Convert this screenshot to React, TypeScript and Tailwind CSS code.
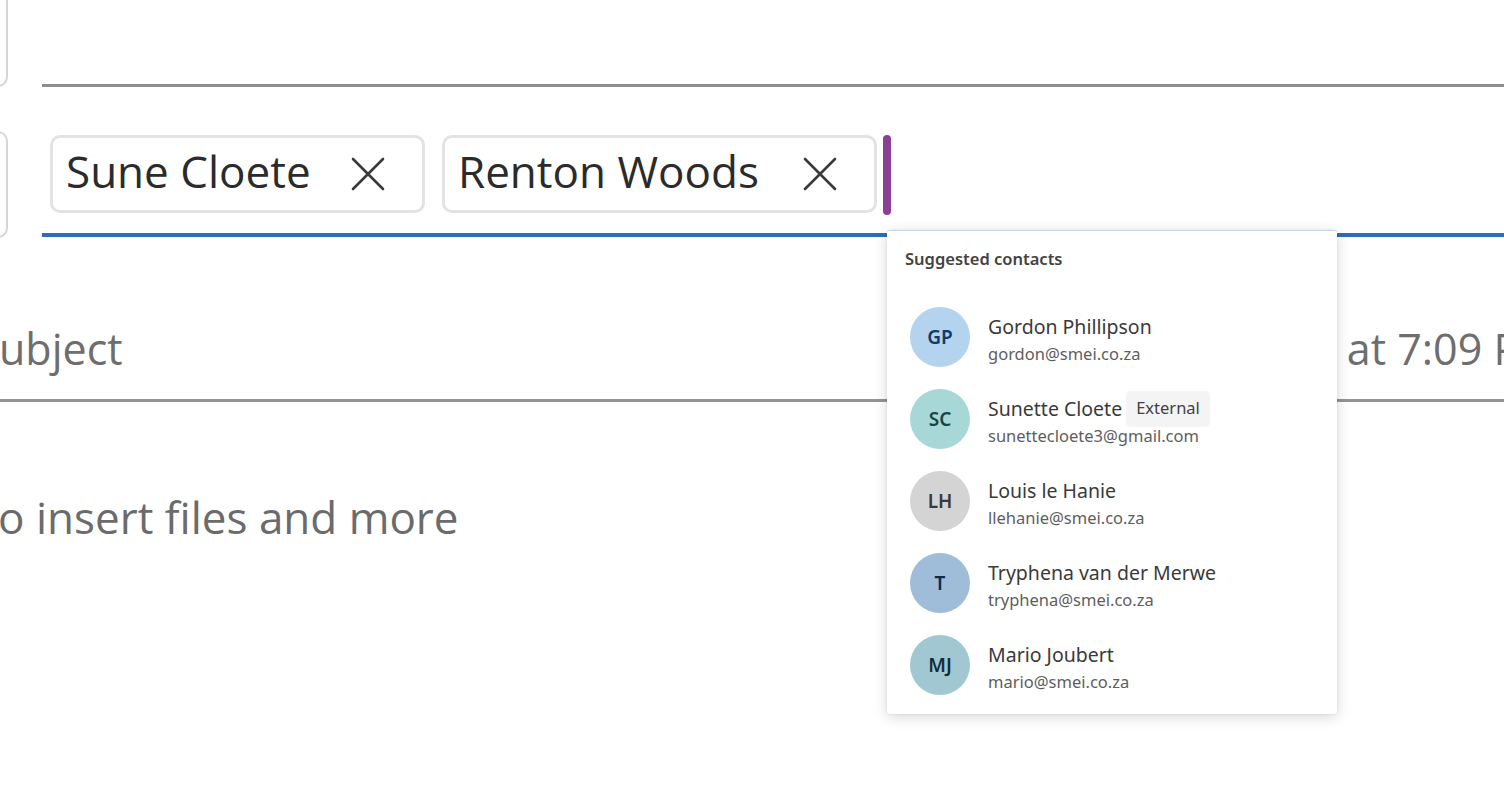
import React from "react";

const contacts = [
  { initials: "GP", name: "Gordon Phillipson", email: "gordon@smei.co.za", bg: "bg-[#b3d3ef]", fg: "text-[#0f3a6b]", external: false },
  { initials: "SC", name: "Sunette Cloete", email: "sunettecloete3@gmail.com", bg: "bg-[#a8d7d7]", fg: "text-[#174745]", external: true },
  { initials: "LH", name: "Louis le Hanie", email: "llehanie@smei.co.za", bg: "bg-[#d5d4d5]", fg: "text-[#3b3b3b]", external: false },
  { initials: "T", name: "Tryphena van der Merwe", email: "tryphena@smei.co.za", bg: "bg-[#9fbcd8]", fg: "text-[#0d2b4b]", external: false },
  { initials: "MJ", name: "Mario Joubert", email: "mario@smei.co.za", bg: "bg-[#a1c8d2]", fg: "text-[#112f38]", external: false },
];

function XIcon() {
  return (
    <svg width="36" height="36" viewBox="0 0 36 36" fill="none">
      <path d="M3 3 L33 33 M33 3 L3 33" stroke="#3a3a3a" strokeWidth="2.6" strokeLinecap="round" />
    </svg>
  );
}

function Chip({ label, width }: { label: string; width: string }) {
  return (
    <div className={`flex items-center justify-between h-[78px] ${width} rounded-[10px] border-[3px] border-[#e3e3e3] pl-[13px] pr-[36px]`}>
      <span className="text-[44px] leading-none text-[#2b2b2b] pb-[6px]">{label}</span>
      <XIcon />
    </div>
  );
}

export default function App() {
  return (
    <div className="relative w-[1504px] h-[810px] overflow-hidden bg-white font-['Open_Sans',sans-serif]">
      {/* Row 1 */}
      <div className="flex items-start h-[87px]">
        <div className="shrink-0 -ml-[100px] -mt-[20px] w-[108px] h-[107px] rounded-[10px] border-[2px] border-[#d6d6d6]" />
        <div className="flex-1 ml-[34px] h-[87px] border-b-[3px] border-[#8e8e8e]" />
      </div>

      {/* Row 2 - recipients */}
      <div className="flex items-start h-[151px]">
        <div className="shrink-0 -ml-[100px] mt-[44px] w-[108px] h-[107px] rounded-[10px] border-[2px] border-[#d6d6d6]" />
        <div className="flex-1 ml-[34px] h-[150px] border-b-[4px] border-[#2f6bbf] flex items-start pt-[48px] pl-[8px] gap-[17px]">
          <Chip label="Sune Cloete" width="w-[375px]" />
          <Chip label="Renton Woods" width="w-[435px]" />
          <div className="-ml-[11px] mt-0 w-[8px] h-[80px] rounded-full bg-[#8b3f97]" />
        </div>
      </div>

      {/* Row 3 - subject */}
      <div className="flex items-start justify-between h-[164px] border-b-[3px] border-[#939393]">
        <span className="text-[43px] leading-[66px] text-[#6e6e6e] -ml-[1px] mt-[78px]">ubject</span>
        <span className="text-[43px] leading-[66px] text-[#6e6e6e] whitespace-nowrap -mr-[54px] mt-[78px]">at 7:09 PM</span>
      </div>

      {/* Body */}
      <div className="pt-[82px]">
        <span className="text-[44px] leading-[66px] text-[#6b6b6b] -ml-[2px] whitespace-nowrap">o insert files and more</span>
      </div>

      {/* Suggestions dropdown */}
      <div className="absolute left-[887px] top-[230px] w-[450px] h-[484px] bg-white rounded-[3px] border-t border-[#c9d7ea] shadow-[0_3px_14px_rgba(0,0,0,0.16),0_0_3px_rgba(0,0,0,0.08)] font-['Noto_Sans',sans-serif]">
        <div className="pl-[18px] pt-[17px] text-[16.5px] font-semibold text-[#424242] leading-[22px]">Suggested contacts</div>
        <div className="mt-[37px] flex flex-col gap-[22px]">
          {contacts.map((c) => (
            <div key={c.initials} className="flex items-center pl-[23px] h-[60px]">
              <div className={`w-[60px] h-[60px] rounded-full flex items-center justify-center ${c.bg} ${c.fg} text-[19px] font-semibold`}>
                {c.initials}
              </div>
              <div className="ml-[18px] flex flex-col pt-[4px]">
                <div className="flex items-center h-[28px]">
                  <span className="text-[19.5px] leading-[28px] text-[#3a3a3a]">{c.name}</span>
                  {c.external && (
                    <span className="ml-[4px] px-[10px] h-[36px] flex items-center rounded-[5px] bg-[#f4f4f4] text-[16.5px] text-[#424242]">External</span>
                  )}
                </div>
                <span className="mt-[1px] text-[16.5px] leading-[24px] text-[#5e5e5e]">{c.email}</span>
              </div>
            </div>
          ))}
        </div>
      </div>
    </div>
  );
}
